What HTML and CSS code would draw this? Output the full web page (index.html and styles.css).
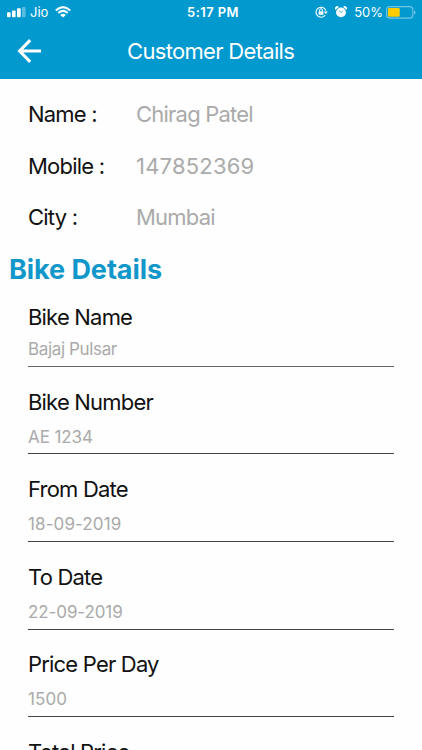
FILE: index.html
```html
<!DOCTYPE html>
<html lang="en">
<head>
<meta charset="utf-8">
<title>Customer Details</title>
<link rel="stylesheet" href="styles.css">
</head>
<body>
<header class="header">
  <div class="status">
    <div class="status-left">
      <svg class="signal" width="19" height="11" viewBox="0 0 19 11" fill="#fff"><rect x="0" y="5.3" width="3.6" height="5" rx="1"/><rect x="5" y="3.5" width="3.6" height="6.8" rx="1"/><rect x="10" y="1.3" width="3.7" height="9" rx="1"/><rect x="15" y="0" width="3.6" height="10.3" rx="1" opacity=".35"/></svg>
      <span class="carrier">Jio</span>
      <svg width="16" height="12" viewBox="0 0 16 12" fill="none" stroke="#fff" stroke-width="2"><path d="M.8 4.4Q8-2.1 15.2 4.4"/><path d="M3.3 7Q8 2.8 12.7 7"/><path d="M8 11.6 5.2 8.9Q8 6.6 10.8 8.9Z" fill="#fff" stroke="none"/></svg>
    </div>
    <div class="clock">5:17 PM</div>
    <div class="status-right">
      <svg width="13" height="12" viewBox="0 0 13 12" fill="none" stroke="#fff"><path d="M10.2 9A5 5 0 1 1 10.8 4.7" stroke-width="1.1"/><path d="M8.7 5.4h4.1l-2 2.7z" fill="#fff" stroke="none"/><rect x="3.6" y="5.2" width="4.8" height="3.6" rx=".5" fill="#fff" stroke="none"/><path d="M4.6 5.5V4.1a1.4 1.4 0 0 1 2.8 0v1.4"/></svg>
      <svg class="alarm" width="12" height="12" viewBox="0 0 12 12"><g fill="#fff"><circle cx="6" cy="6.4" r="4.9"/><path d="M.5 3.7A2 2 0 0 1 3.8.9zM11.5 3.7A2 2 0 0 0 8.2.9z"/></g><path d="M4.2 4.6 6 6.6 7.7 5.2" fill="none" stroke="#0299cf" stroke-width=".8"/></svg>
      <span class="percent">50%</span>
      <svg width="30" height="13" viewBox="0 0 30 13"><rect x=".6" y=".6" width="26.2" height="11.5" rx="3" fill="none" stroke="#72c6e5" stroke-width="1.1"/><rect x="2" y="2" width="11.7" height="8.7" rx="1.2" fill="#fc0"/><path d="M28 4.4c2 .6 2 3.5 0 4.1z" fill="#72c6e5"/></svg>
    </div>
  </div>
  <div class="navbar">
    <svg class="back" width="26" height="26" viewBox="0 0 26 26" fill="none" stroke="#fff" stroke-width="3.1"><path d="M24 13H3.5M13.2 2.2 2.6 13l10.6 10.8"/></svg>
    <h1 class="title">Customer Details</h1>
  </div>
</header>
<main>
  <dl class="customer">
    <div class="row"><dt>Name :</dt><dd>Chirag Patel</dd></div>
    <div class="row"><dt>Mobile :</dt><dd class="digits">147852369</dd></div>
    <div class="row"><dt>City :</dt><dd>Mumbai</dd></div>
  </dl>
  <h2 class="section">Bike Details</h2>
  <div class="fields">
    <div class="field first"><div class="label">Bike Name</div><div class="value words">Bajaj Pulsar</div></div>
    <div class="field"><div class="label">Bike Number</div><div class="value">AE 1234</div></div>
    <div class="field"><div class="label">From Date</div><div class="value date">18-09-2019</div></div>
    <div class="field"><div class="label">To Date</div><div class="value">22-09-2019</div></div>
    <div class="field"><div class="label">Price Per Day</div><div class="value date">1500</div></div>
    <div class="field"><div class="label">Total Price</div></div>
  </div>
</main>
</body>
</html>
```
FILE: styles.css
```css
* { box-sizing: border-box; margin: 0; padding: 0; }
html, body { height: 750px; overflow: hidden; }
body { background: #fefefe; color: #111; font-family: Inter, "Liberation Sans", sans-serif; }
svg { display: block; flex: none; }
.header { height: 79px; background: #0299cf; color: #fff; }
.status { height: 24px; display: grid; grid-template-columns: 1fr auto 1fr; align-items: center; padding: 0 6px 0 7px; font-size: 13px; line-height: 24px; }
.status-left, .status-right { display: flex; align-items: center; }
.status-right { justify-content: flex-end; }
.carrier { margin: 0 7px 0 4px; font-size: 13px; }
.clock { padding-left: 3px; font-weight: 600; letter-spacing: .4px; }
.alarm { margin-left: 7px; }
.percent { margin: 0 3px 0 7px; font-size: 13px; }
.navbar { height: 55px; display: grid; grid-template-columns: 110px 1fr 110px; align-items: center; padding: 0 0 1px 17px; }
.title { font-size: 22px; font-weight: 400; line-height: 54px; white-space: nowrap; letter-spacing: -.68px; }
.customer { padding: 10px 28px 0; font-size: 22px; }
.row { display: grid; grid-template-columns: 108px 1fr; height: 51.6px; line-height: 51.6px; letter-spacing: -.78px; }
.row dd { color: #aaa; }
.row .digits { letter-spacing: .2px; }
.section { height: 52.3px; padding-left: 9px; font-size: 27px; line-height: 51px; font-weight: 700; color: #1297cb; letter-spacing: -.06px; }
.fields { padding: 0 28px; }
.field { height: 87.6px; padding-top: 19.8px; border-bottom: 1px solid #444; }
.field.first { height: 70.7px; padding-top: 5.5px; border-color: #666; }
.label { font-size: 22px; line-height: 30px; letter-spacing: -.8px; }
.value { margin-top: 8px; font-size: 17px; line-height: 24px; color: #aaa; letter-spacing: -.1px; }
.value.words { margin-top: 5px; letter-spacing: -.36px; }
.value.date { letter-spacing: .1px; }
```
